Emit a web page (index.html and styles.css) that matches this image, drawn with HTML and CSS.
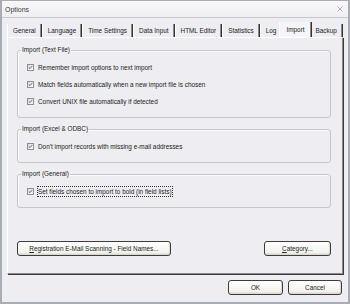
FILE: index.html
```html
<!DOCTYPE html>
<html>
<head>
  <title>Options</title>
  <link rel="stylesheet" href="styles.css">
</head>
<body>
  <div class="window">
    <div class="titlebar">
      <span class="title">Options</span>
      <svg class="close" width="6" height="6" viewBox="0 0 6 6"><path d="M0.5 0.5 L5.5 5.5 M5.5 0.5 L0.5 5.5" stroke="#b0b0b6" stroke-width="1" fill="none"/></svg>
    </div>
    <div class="tabs">
      <span class="tab">General</span>
      <span class="tab">Language</span>
      <span class="tab">Time Settings</span>
      <span class="tab">Data Input</span>
      <span class="tab">HTML Editor</span>
      <span class="tab">Statistics</span>
      <span class="tab">Log</span>
      <span class="tab active">Import</span>
      <span class="tab">Backup</span>
    </div>
    <div class="page">
      <fieldset class="group">
        <legend>Import (Text File)</legend>
        <div class="rows">
          <label class="check"><span class="box"><svg width="7" height="7" viewBox="0 0 7 7"><path d="M1.2 3.4 L2.8 5 L5.8 1.6" stroke="#3a3a3a" stroke-width="1.1" fill="none"/></svg></span>Remember import options to next import</label>
          <label class="check"><span class="box"><svg width="7" height="7" viewBox="0 0 7 7"><path d="M1.2 3.4 L2.8 5 L5.8 1.6" stroke="#3a3a3a" stroke-width="1.1" fill="none"/></svg></span>Match fields automatically when a new import file is chosen</label>
          <label class="check"><span class="box"><svg width="7" height="7" viewBox="0 0 7 7"><path d="M1.2 3.4 L2.8 5 L5.8 1.6" stroke="#3a3a3a" stroke-width="1.1" fill="none"/></svg></span>Convert UNIX file automatically if detected</label>
        </div>
      </fieldset>
      <fieldset class="group">
        <legend>Import (Excel &amp; ODBC)</legend>
        <div class="rows">
          <label class="check"><span class="box"><svg width="7" height="7" viewBox="0 0 7 7"><path d="M1.2 3.4 L2.8 5 L5.8 1.6" stroke="#3a3a3a" stroke-width="1.1" fill="none"/></svg></span>Don't import records with missing e-mail addresses</label>
        </div>
      </fieldset>
      <fieldset class="group">
        <legend>Import (General)</legend>
        <div class="rows">
          <label class="check"><span class="box"><svg width="7" height="7" viewBox="0 0 7 7"><path d="M1.2 3.4 L2.8 5 L5.8 1.6" stroke="#3a3a3a" stroke-width="1.1" fill="none"/></svg></span><span class="focus">Set fields chosen to import to bold (in field lists)</span></label>
        </div>
      </fieldset>
      <div class="page-buttons">
        <button class="btn reg"><u>R</u>egistration E-Mail Scanning - Field Names...</button>
        <button class="btn cat"><u>C</u>ategory...</button>
      </div>
    </div>
    <div class="footer">
      <button class="btn ok">OK</button>
      <button class="btn cancel">Cancel</button>
    </div>
  </div>
</body>
</html>
```

FILE: styles.css
```css
body { margin: 0; font-family: "Liberation Sans", Arial, sans-serif; font-size: 6.4px; color: #222; }
.window { width: 350px; height: 304px; box-sizing: border-box; background: #eeedf2; border: 2px solid #a9acb4; border-top-width: 1px; }

.titlebar { height: 16px; display: flex; align-items: center; justify-content: space-between; padding: 0 5px 0 3px; background: linear-gradient(#f8f8fa, #efeff3); border-bottom: 1px solid #c8c8ce; }
.title { font-size: 7px; color: #3a3a3a; }

.tabs { display: flex; align-items: flex-end; height: 15px; margin: 4px 0 0 5px; }
.tab { height: 13px; line-height: 14px; padding: 0 4px 0 5px; border-left: 1px solid #fff; border-right: 1px solid #8a8a8a; box-shadow: 1px 0 0 #333; margin-right: 1px; white-space: nowrap; }
.tab.active { height: 15px; line-height: 15px; background: #f5f4f8; margin: 0 -1px 0 -3px; padding: 0 5px 0 6px; position: relative; }

.page { width: 336px; box-sizing: border-box; margin-left: 5px; padding: 8px 11px 17px 9px; border: 1px solid; border-color: #fff #8a8a8a #8a8a8a #fff; box-shadow: 1px 1px 0 #3a3a3a; }

.group { margin: 7px 0 0; padding: 0 8px 0 3px; border: 1px solid #c6c6cc; border-radius: 3px; box-shadow: inset 1px 1px 0 #fbfbfd; }
.group:first-child { margin-top: 0; }
.group legend { padding: 0 1px; line-height: 8px; }
.rows { padding: 5px 0 7px 6px; }
.check { display: flex; align-items: center; height: 17px; white-space: nowrap; }
.box { width: 5px; height: 5px; margin-right: 4px; border: 1px solid #8e8f96; background: linear-gradient(135deg, #dcdcd6, #fdfdfb); display: flex; align-items: center; justify-content: center; }
.box svg { width: 5px; height: 5px; }
.focus { outline: 1px dotted #333; outline-offset: 0; padding: 1px 0; }

.page-buttons { display: flex; justify-content: space-between; margin-top: 33px; }
.btn { height: 15px; padding: 0; font: inherit; color: #222; border: 1px solid #3c3c3c; border-radius: 3px; background: linear-gradient(#ffffff, #f3f3ef 80%, #d9d6cc); box-shadow: inset -1px -1px 0 #dcd8cf; }
.reg { width: 154px; }
.cat { width: 67px; }

.footer { display: flex; justify-content: flex-end; gap: 5px; padding: 6px 6px 0 0; }
.ok { width: 55px; }
.cancel { width: 54px; }
```
